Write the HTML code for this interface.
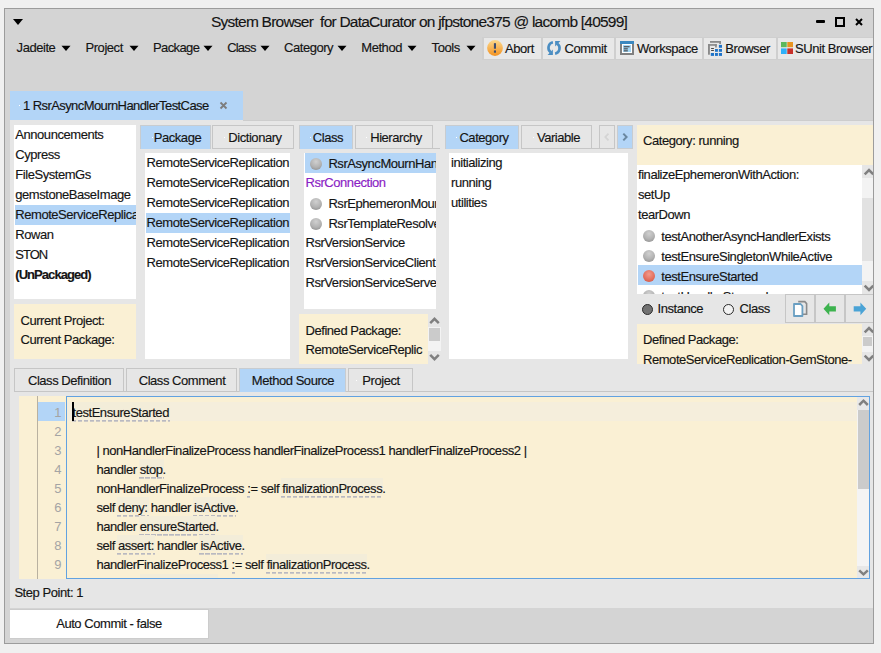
<!DOCTYPE html><html><head><meta charset="utf-8"><style>
*{margin:0;padding:0;box-sizing:border-box}
html,body{width:881px;height:653px;overflow:hidden;background:#f0f0f0;font-family:"Liberation Sans",sans-serif;color:#141414}
div,svg{position:absolute}
.t{-webkit-text-stroke:0.15px currentColor;white-space:nowrap;font-size:13px;letter-spacing:-0.45px;line-height:20px;height:20px}
.clip{overflow:hidden}
.tk{display:inline-block;vertical-align:top;margin:-1px -1px 0 -1px;padding:1px 1px 0 1px;height:20px;background:linear-gradient(#f3edd9,#f3edd9) 0 0/100% 16px no-repeat,repeating-linear-gradient(90deg,#b9b9c1 0 4.5px,transparent 4.5px 6px) 0 18px/100% 1.7px no-repeat}
.cd{display:inline-block;vertical-align:top;margin-top:-1px;padding-top:1px;height:20px;background:linear-gradient(#b9b9c1,#b9b9c1) 0 18px/100% 1.7px no-repeat}
.sph{width:12px;height:12px;border-radius:50%;background:radial-gradient(circle at 50% 30%,#d0d0d0 0,#b2b2b2 55%,#868686 100%)}
.sphr{width:12px;height:12px;border-radius:50%;background:radial-gradient(circle at 50% 35%,#f29a8c 0,#e4705f 55%,#c95241 100%)}
</style></head><body><div style="left:4px;top:8px;width:870px;height:636px;background:#d4d4d4;border:1px solid #9c9c9c"></div>
<svg style="left:12px;top:18px" width="12" height="8"><path d="M1 1 L11 1 L6 7 Z" fill="#000"/></svg>
<div class="t" style="left:211px;top:12.2px;font-size:15.5px;letter-spacing:-0.77px">System Browser&nbsp; for DataCurator on jfpstone375 @ lacomb [40599]</div>
<div style="left:816px;top:20px;width:9px;height:3px;background:#000;border-radius:1px"></div>
<div style="left:835px;top:17px;width:10px;height:10px;border:2px solid #000"></div>
<svg style="left:855px;top:18px" width="8" height="8"><path d="M1 1 L7 7 M7 1 L1 7" stroke="#000" stroke-width="2"/></svg>
<div class="t" style="left:16.6px;top:38px;">Jadeite</div>
<svg style="left:61px;top:45px" width="10" height="7"><path d="M0.5 0.8 L9.5 0.8 L5 6 Z" fill="#000"/></svg>
<div class="t" style="left:85.5px;top:38px;">Project</div>
<svg style="left:129px;top:45px" width="10" height="7"><path d="M0.5 0.8 L9.5 0.8 L5 6 Z" fill="#000"/></svg>
<div class="t" style="left:153px;top:38px;letter-spacing:-0.62px">Package</div>
<svg style="left:203px;top:45px" width="10" height="7"><path d="M0.5 0.8 L9.5 0.8 L5 6 Z" fill="#000"/></svg>
<div class="t" style="left:227.2px;top:38px;letter-spacing:-0.8px">Class</div>
<svg style="left:259.5px;top:45px" width="10" height="7"><path d="M0.5 0.8 L9.5 0.8 L5 6 Z" fill="#000"/></svg>
<div class="t" style="left:284px;top:38px;">Category</div>
<svg style="left:337px;top:45px" width="10" height="7"><path d="M0.5 0.8 L9.5 0.8 L5 6 Z" fill="#000"/></svg>
<div class="t" style="left:361.3px;top:38px;">Method</div>
<svg style="left:406.7px;top:45px" width="10" height="7"><path d="M0.5 0.8 L9.5 0.8 L5 6 Z" fill="#000"/></svg>
<div class="t" style="left:431.6px;top:38px;">Tools</div>
<svg style="left:466px;top:45px" width="10" height="7"><path d="M0.5 0.8 L9.5 0.8 L5 6 Z" fill="#000"/></svg>
<div style="left:482px;top:37px;width:392px;height:23px;background:#cfcfcf"></div>
<div style="left:484px;top:38px;width:57px;height:21px;background:#e8e8e8"></div>
<div style="left:543px;top:38px;width:71px;height:21px;background:#e8e8e8"></div>
<div style="left:616px;top:38px;width:86px;height:21px;background:#e8e8e8"></div>
<div style="left:704px;top:38px;width:72px;height:21px;background:#e8e8e8"></div>
<div style="left:778px;top:38px;width:95px;height:21px;background:#e8e8e8"></div>
<svg style="left:484px;top:38px" width="20" height="20"><defs><linearGradient id="og" x1="0" y1="0" x2="0" y2="1"><stop offset="0" stop-color="#fcd88c"/><stop offset="1" stop-color="#f39220"/></linearGradient></defs><circle cx="11" cy="10" r="7.9" fill="url(#og)"/><rect x="9.9" y="5.2" width="2.1" height="5.5" fill="#3d4d70"/><rect x="9.9" y="12.4" width="2.1" height="2.3" fill="#3d4d70"/></svg>
<div class="t" style="left:505px;top:38.5px;">Abort</div>
<svg style="left:544px;top:38px" width="20" height="20"><g fill="none" stroke="#4a8dc2" stroke-width="2.6"><path d="M8.9 4.3 A5.6 5.6 0 0 0 6.6 14.2"/><path d="M11.1 15.7 A5.6 5.6 0 0 0 13.4 5.8"/></g><g fill="#4a8dc2"><path d="M3.6 16.9 L8.9 16.9 L8.9 11.5 Z"/><path d="M16.4 3.1 L11.1 3.1 L11.1 8.5 Z"/></g></svg>
<div class="t" style="left:564.5px;top:38.5px;">Commit</div>
<svg style="left:620px;top:41px" width="14" height="14"><rect x="0" y="3" width="14" height="11" fill="#808080"/><rect x="0" y="0" width="14" height="3" fill="#3a88c0"/><rect x="2" y="3" width="10" height="9" fill="#fff"/><rect x="3" y="4" width="8" height="7" fill="#a2d6f6"/><g fill="#444"><rect x="3.8" y="5.2" width="5.8" height="1.1"/><rect x="3.8" y="7.3" width="4" height="1.1"/><rect x="3.8" y="9.3" width="4" height="1.1"/></g></svg>
<div class="t" style="left:637px;top:38.5px;">Workspace</div>
<svg style="left:705px;top:38px" width="20" height="20"><g fill="#8a8a8a"><rect x="5" y="3" width="11" height="1.8"/><rect x="14.2" y="3" width="1.8" height="3"/><rect x="3" y="6.1" width="8.8" height="1.7"/><rect x="3" y="6.1" width="1.9" height="10.6"/><rect x="10.1" y="6.1" width="1.7" height="3.4"/></g><g fill="#333"><rect x="6.1" y="10" width="2.8" height="0.9"/><rect x="6.1" y="12" width="2.8" height="0.9"/></g><g fill="#1e73c8"><rect x="13.9" y="6.9" width="3.1" height="2.9"/><rect x="10" y="11" width="2.9" height="2.8"/><rect x="13.9" y="11" width="3.1" height="2.8"/><rect x="5.8" y="15" width="3.2" height="2.9"/><rect x="10" y="15" width="2.9" height="2.9"/><rect x="13.9" y="15" width="3.1" height="2.9"/></g></svg>
<div class="t" style="left:725.3px;top:38.5px;">Browser</div>
<svg style="left:781px;top:42px" width="12" height="12"><rect x="0" y="0" width="5.7" height="5.2" fill="#5cb85c"/><rect x="6.3" y="0" width="5.7" height="5.2" fill="#e8941f"/><rect x="0" y="6.4" width="5.7" height="5.6" fill="#30b0f8"/><rect x="6.3" y="6.4" width="5.7" height="5.6" fill="#c8302a"/></svg>
<div class="clip" style="left:794px;top:38px;width:79px;height:21px"><div class="t" style="left:1px;top:0.5px">SUnit Browser</div></div>
<div style="left:10px;top:91px;width:233px;height:29px;background:#b3d5f7"></div>
<div style="left:19px;top:105px;width:1px;height:1px;background:#fff"></div>
<div class="t" style="left:23px;top:96.3px;letter-spacing:-0.58px">1 RsrAsyncMournHandlerTestCase</div>
<svg style="left:219px;top:101px" width="9" height="9"><path d="M1.5 1.5 L7.5 7.5 M7.5 1.5 L1.5 7.5" stroke="#7d7d7d" stroke-width="1.8"/></svg>
<div style="left:10px;top:120px;width:863px;height:488px;background:#e6e6e6"></div>
<div style="left:243px;top:120px;width:630px;height:1px;background:#cdcdcd"></div>
<div style="left:14px;top:125px;width:122px;height:174px;background:#fff"></div>
<div class="clip" style="left:14px;top:125px;width:122px;height:174px">
<div class="t" style="left:1.3px;top:0px">Announcements</div>
<div class="t" style="left:1.3px;top:20px">Cypress</div>
<div class="t" style="left:1.3px;top:40px">FileSystemGs</div>
<div class="t" style="left:1.3px;top:60px">gemstoneBaseImage</div>
<div style="left:1px;top:80px;width:121px;height:20px;background:#b3d5f7"></div>
<div class="t" style="left:1.3px;top:80px">RemoteServiceReplication</div>
<div class="t" style="left:1.3px;top:100px">Rowan</div>
<div class="t" style="left:1.3px;top:120px"><span style="letter-spacing:-1px">STON</span></div>
<div class="t" style="left:1.3px;top:140px"><b style="letter-spacing:-0.95px">(UnPackaged)</b></div>
</div>
<div style="left:14px;top:304px;width:122px;height:55px;background:#faf0d4"></div>
<div class="t" style="left:20.5px;top:310.5px;">Current Project:</div>
<div class="t" style="left:20.5px;top:329.5px;">Current Package:</div>
<div style="left:140px;top:125px;width:71px;height:24px;background:#b3d5f7;border:1px solid #c8ccd0;border-bottom:none"></div>
<div style="left:151.5px;top:137.0px;width:1px;height:1px;background:#fff"></div>
<div class="t" style="left:140px;top:128.3px;width:75px;text-align:center">Package</div>
<div style="left:212px;top:125px;width:82px;height:24px;background:#e6e6e6;border:1px solid #c6c6c6"></div>
<div style="left:223.5px;top:137.0px;width:1px;height:1px;background:#fff"></div>
<div class="t" style="left:212px;top:128.3px;width:86px;text-align:center">Dictionary</div>
<div style="left:145px;top:153px;width:145px;height:206px;background:#fff"></div>
<div class="clip" style="left:145px;top:153px;width:145px;height:206px">
<div class="t" style="left:1.6px;top:0px">RemoteServiceReplication</div>
<div class="t" style="left:1.6px;top:20px">RemoteServiceReplication</div>
<div class="t" style="left:1.6px;top:40px">RemoteServiceReplication</div>
<div style="left:1px;top:60px;width:144px;height:20px;background:#b3d5f7"></div>
<div class="t" style="left:1.6px;top:60px">RemoteServiceReplication</div>
<div class="t" style="left:1.6px;top:80px">RemoteServiceReplication</div>
<div class="t" style="left:1.6px;top:100px">RemoteServiceReplication</div>
</div>
<div style="left:299px;top:125px;width:54px;height:24px;background:#b3d5f7;border:1px solid #c8ccd0;border-bottom:none"></div>
<div style="left:310.0px;top:137.0px;width:1px;height:1px;background:#fff"></div>
<div class="t" style="left:299px;top:128.3px;width:58px;text-align:center">Class</div>
<div style="left:355px;top:125px;width:78px;height:24px;background:#e6e6e6;border:1px solid #c6c6c6"></div>
<div style="left:365.5px;top:137.0px;width:1px;height:1px;background:#fff"></div>
<div class="t" style="left:355px;top:128.3px;width:82px;text-align:center">Hierarchy</div>
<div style="left:304px;top:153px;width:132px;height:156px;background:#fff"></div>
<div class="clip" style="left:304px;top:153px;width:132px;height:156px">
<div style="left:1px;top:0px;width:131px;height:19.5px;background:#b3d5f7"></div>
<div class="sph" style="left:6px;top:5px"></div>
<div class="t" style="left:24.4px;top:1.2px">RsrAsyncMournHandlerTestCase</div>
<div class="t" style="left:1.5px;top:19.6px;color:#8a22c4;">RsrConnection</div>
<div class="sph" style="left:6px;top:45px"></div>
<div class="t" style="left:24.4px;top:41.2px">RsrEphemeronMournerTestCase</div>
<div class="sph" style="left:6px;top:65px"></div>
<div class="t" style="left:24.4px;top:61.2px">RsrTemplateResolverTestCase</div>
<div class="t" style="left:1.5px;top:79.6px;">RsrVersionService</div>
<div class="t" style="left:1.5px;top:99.6px;">RsrVersionServiceClient</div>
<div class="t" style="left:1.5px;top:119.6px;">RsrVersionServiceServer</div>
</div>
<div style="left:299px;top:314px;width:129px;height:50px;background:#faf0d4"></div>
<div class="clip" style="left:299px;top:314px;width:129px;height:50px">
<div class="t" style="left:6.5px;top:6.5px">Defined Package:</div>
<div class="t" style="left:6.5px;top:26px">RemoteServiceReplic</div>
</div>
<div style="left:428px;top:327px;width:13px;height:24px;background:#f3f3f3"></div>
<div style="left:429px;top:328px;width:11px;height:13px;background:#cbcbcb"></div>
<svg style="left:0;top:0" width="873" height="653"><path d="M430.2 323.1 L434.5 318.8 L438.8 323.1" stroke="#808080" stroke-width="2.5" fill="none"/></svg>
<svg style="left:0;top:0" width="873" height="653"><path d="M430.2 354.9 L434.5 359.2 L438.8 354.9" stroke="#808080" stroke-width="2.5" fill="none"/></svg>
<div style="left:432px;top:148px;width:8px;height:1px;background:#c6c6c6"></div>
<div style="left:591px;top:148px;width:8px;height:1px;background:#c6c6c6"></div>
<div style="left:445px;top:125px;width:74px;height:24px;background:#b3d5f7;border:1px solid #c8ccd0;border-bottom:none"></div>
<div style="left:455.5px;top:137.0px;width:1px;height:1px;background:#fff"></div>
<div class="t" style="left:445px;top:128.3px;width:78px;text-align:center">Category</div>
<div style="left:521px;top:125px;width:71px;height:24px;background:#e6e6e6;border:1px solid #c6c6c6"></div>
<div style="left:533.0px;top:137.0px;width:1px;height:1px;background:#fff"></div>
<div class="t" style="left:521px;top:128.3px;width:75px;text-align:center">Variable</div>
<div style="left:599px;top:125px;width:16px;height:24px;background:#e6e6e6;border:1px solid #c6c6c6"></div>
<svg style="left:599px;top:125px" width="16" height="24"><path d="M9.5 8.6 L6.3 12 L9.5 15.4" stroke="#d4d4d4" stroke-width="1.8" fill="none"/></svg>
<div style="left:617px;top:125px;width:16px;height:24px;background:#b3d5f7;border:1px solid #c8ccd0"></div>
<svg style="left:617px;top:125px" width="16" height="24"><path d="M6.3 8.6 L9.6 12 L6.3 15.4" stroke="#6a87a0" stroke-width="2" fill="none"/></svg>
<div style="left:449px;top:153px;width:179px;height:206px;background:#fff"></div>
<div class="t" style="left:451px;top:152.6px;">initializing</div>
<div class="t" style="left:451px;top:172.6px;">running</div>
<div class="t" style="left:451px;top:192.6px;">utilities</div>
<div style="left:637px;top:125px;width:236px;height:40px;background:#faf0d4"></div>
<div class="t" style="left:643px;top:131.3px;">Category: running</div>
<div style="left:637px;top:165px;width:225px;height:129px;background:#fff"></div>
<div class="clip" style="left:637px;top:165px;width:225px;height:129px">
<div class="t" style="left:1px;top:-0.3px">finalizeEphemeronWithAction:</div>
<div class="t" style="left:1px;top:19.7px">setUp</div>
<div class="t" style="left:1px;top:39.7px">tearDown</div>
<div class="sph" style="left:6px;top:65px"></div>
<div class="t" style="left:24.3px;top:62px">testAnotherAsyncHandlerExists</div>
<div class="sph" style="left:6px;top:85px"></div>
<div class="t" style="left:24.3px;top:82px">testEnsureSingletonWhileActive</div>
<div style="left:1px;top:100px;width:224px;height:20px;background:#b3d5f7"></div>
<div class="sphr" style="left:6px;top:105px"></div>
<div class="t" style="left:24.3px;top:102px">testEnsureStarted</div>
<div class="sph" style="left:6px;top:125px"></div>
<div class="t" style="left:24.3px;top:122px">testHandlerStopped</div>
</div>
<div class="clip" style="left:862px;top:165px;width:11px;height:129px">
<div style="left:0px;top:13px;width:11px;height:20px;background:#f3f3f3"></div>
<div style="left:0px;top:33px;width:11px;height:63px;background:#e2e2e2"></div>
<div style="left:0px;top:96px;width:11px;height:20px;background:#f3f3f3"></div>
<svg style="left:0;top:0" width="11" height="129"><path d="M2.7 9.3 L7 5 L11.3 9.3" stroke="#808080" stroke-width="2.5" fill="none"/><path d="M2.7 120.7 L7 125 L11.3 120.7" stroke="#808080" stroke-width="2.5" fill="none"/></svg>
</div>
<div style="left:641.5px;top:303.5px;width:11px;height:11px;border-radius:50%;background:#727272;border:1.5px solid #2a2a2a"></div>
<div class="t" style="left:657.5px;top:299px;">Instance</div>
<div style="left:723.3px;top:303.5px;width:11px;height:11px;border-radius:50%;background:#f2f2f2;border:1.5px solid #2a2a2a"></div>
<div class="t" style="left:739.5px;top:299px;">Class</div>
<div style="left:785px;top:294px;width:30px;height:29px;background:#e6e6e6;border:1px solid #c6c6c6"></div>
<div style="left:815px;top:294px;width:30px;height:29px;background:#e6e6e6;border:1px solid #c6c6c6"></div>
<div style="left:845px;top:294px;width:28px;height:29px;background:#e6e6e6;border:1px solid #c6c6c6;border-right:none"></div>
<svg style="left:785px;top:294px" width="30" height="30"><path d="M13.2 7.6 H19.8 L21.6 9.6 V20.2 H18" stroke="#8a8a8a" stroke-width="1.6" fill="none"/><path d="M9 10 H15.6 L17.4 12 V22 H9 Z" stroke="#6a9fc2" stroke-width="1.8" fill="#fff" stroke-linejoin="round"/></svg>
<svg style="left:823px;top:302px" width="14" height="14"><path d="M0.5 6.8 L6.3 0.4 V4.2 H12.9 V9.5 H6.3 V13.3 Z" fill="#3db34f"/></svg>
<svg style="left:853px;top:302px" width="14" height="14"><path d="M13.2 6.8 L7.4 0.4 V4.2 H0.7 V9.5 H7.4 V13.3 Z" fill="#4aa3d6"/></svg>
<div style="left:637px;top:324px;width:225px;height:40px;background:#faf0d4"></div>
<div class="clip" style="left:637px;top:324px;width:225px;height:40px">
<div class="t" style="left:6px;top:6px">Defined Package:</div>
<div class="t" style="left:6px;top:25.8px">RemoteServiceReplication-GemStone-</div>
</div>
<div class="clip" style="left:862px;top:324px;width:11px;height:40px">
<div style="left:0px;top:12px;width:11px;height:16px;background:#f3f3f3"></div>
<div style="left:1px;top:13px;width:9px;height:9px;background:#cbcbcb"></div>
<svg style="left:0;top:0" width="11" height="40"><path d="M2.7 8.3 L7 4 L11.3 8.3" stroke="#808080" stroke-width="2.5" fill="none"/><path d="M2.7 31.7 L7 36 L11.3 31.7" stroke="#808080" stroke-width="2.5" fill="none"/></svg>
</div>
<div style="left:14px;top:391px;width:859px;height:1px;background:#c6c6c6"></div>
<div style="left:14px;top:368px;width:110px;height:24px;background:#e6e6e6;border:1px solid #c6c6c6"></div>
<div class="t" style="left:14px;top:371.3px;width:111.0px;text-align:center">Class Definition</div>
<div style="left:126px;top:368px;width:111px;height:24px;background:#e6e6e6;border:1px solid #c6c6c6"></div>
<div class="t" style="left:126px;top:371.3px;width:112.0px;text-align:center">Class Comment</div>
<div style="left:239px;top:368px;width:107px;height:24px;background:#b3d5f7;border:1px solid #c8ccd0;border-bottom:none"></div>
<div class="t" style="left:239px;top:371.3px;width:108.0px;text-align:center">Method Source</div>
<div style="left:348px;top:368px;width:65px;height:24px;background:#e6e6e6;border:1px solid #c6c6c6"></div>
<div style="left:355.5px;top:380.0px;width:1px;height:1px;background:#fff"></div>
<div class="t" style="left:348px;top:371.3px;width:66.0px;text-align:center">Project</div>
<div style="left:19px;top:396px;width:47px;height:183px;background:#faf0d4"></div>
<div style="left:37px;top:396px;width:1px;height:183px;background:#b9b1a0"></div>
<div style="left:38px;top:402px;width:27px;height:19px;background:#b3d5f7"></div>
<div style="left:66px;top:396px;width:804px;height:183px;background:#faf0d4;border:1px solid #62a2e0"></div>
<div style="left:67px;top:402px;width:790px;height:19px;background:#f5eedc"></div>
<div class="t" style="left:38px;width:23px;text-align:right;top:403px;color:#a4a4a4;-webkit-text-stroke:0">1</div>
<div class="t" style="left:38px;width:23px;text-align:right;top:422px;color:#a4a4a4;-webkit-text-stroke:0">2</div>
<div class="t" style="left:38px;width:23px;text-align:right;top:441px;color:#a4a4a4;-webkit-text-stroke:0">3</div>
<div class="t" style="left:38px;width:23px;text-align:right;top:460px;color:#a4a4a4;-webkit-text-stroke:0">4</div>
<div class="t" style="left:38px;width:23px;text-align:right;top:479px;color:#a4a4a4;-webkit-text-stroke:0">5</div>
<div class="t" style="left:38px;width:23px;text-align:right;top:498px;color:#a4a4a4;-webkit-text-stroke:0">6</div>
<div class="t" style="left:38px;width:23px;text-align:right;top:517px;color:#a4a4a4;-webkit-text-stroke:0">7</div>
<div class="t" style="left:38px;width:23px;text-align:right;top:536px;color:#a4a4a4;-webkit-text-stroke:0">8</div>
<div class="t" style="left:38px;width:23px;text-align:right;top:555px;color:#a4a4a4;-webkit-text-stroke:0">9</div>
<div class="t" style="left:72.5px;top:403px"><span class="tk">testEnsureStarted</span></div>
<div class="t" style="left:96.4px;top:441px">| nonHandlerFinalizeProcess handlerFinalizeProcess1 handlerFinalizeProcess2 |</div>
<div class="t" style="left:96.4px;top:460px">handler <span class="tk">stop</span>.</div>
<div class="t" style="left:96.4px;top:479px">nonHandlerFinalizeProcess <span class="cd">:</span>= self <span class="tk">finalizationProcess</span>.</div>
<div class="t" style="left:96.4px;top:498px">self <span class="tk">deny:</span> handler <span class="tk">isActive</span>.</div>
<div class="t" style="left:96.4px;top:517px">handler <span class="tk">ensureStarted</span>.</div>
<div class="t" style="left:96.4px;top:536px">self <span class="tk">assert:</span> handler <span class="tk">isActive</span>.</div>
<div class="t" style="left:96.4px;top:555px">handlerFinalizeProcess1 <span class="cd">:</span>= self <span class="tk">finalizationProcess</span>.</div>
<div style="left:72px;top:402px;width:2px;height:19px;background:#000"></div>
<div style="left:140px;top:574px;width:78px;height:4px;background:#f3edd9"></div>
<div style="left:857px;top:397px;width:12px;height:13px;background:#e8e8e8"></div>
<div style="left:857px;top:410px;width:12px;height:156px;background:#f4f4f4"></div>
<div style="left:858px;top:410px;width:11px;height:79px;background:#cbcbcb"></div>
<div style="left:857px;top:566px;width:12px;height:12px;background:#e8e8e8"></div>
<svg style="left:857px;top:397px" width="12" height="180"><path d="M2.2 8 L6.5 3.7 L10.8 8" stroke="#808080" stroke-width="2.5" fill="none"/><path d="M2.2 173.3 L6.5 177.3 L10.8 173.3" stroke="#808080" stroke-width="2.5" fill="none"/></svg>
<div class="t" style="left:14.4px;top:583.4px;">Step Point: 1</div>
<div style="left:10px;top:609px;width:199px;height:30px;background:#fff;border:1px solid #cccccc;border-left:none"></div>
<div class="t" style="left:10px;top:613.5px;width:198px;text-align:center">Auto Commit - false</div>
<div style="left:873px;top:8px;width:1px;height:636px;background:#9c9c9c"></div></body></html>
